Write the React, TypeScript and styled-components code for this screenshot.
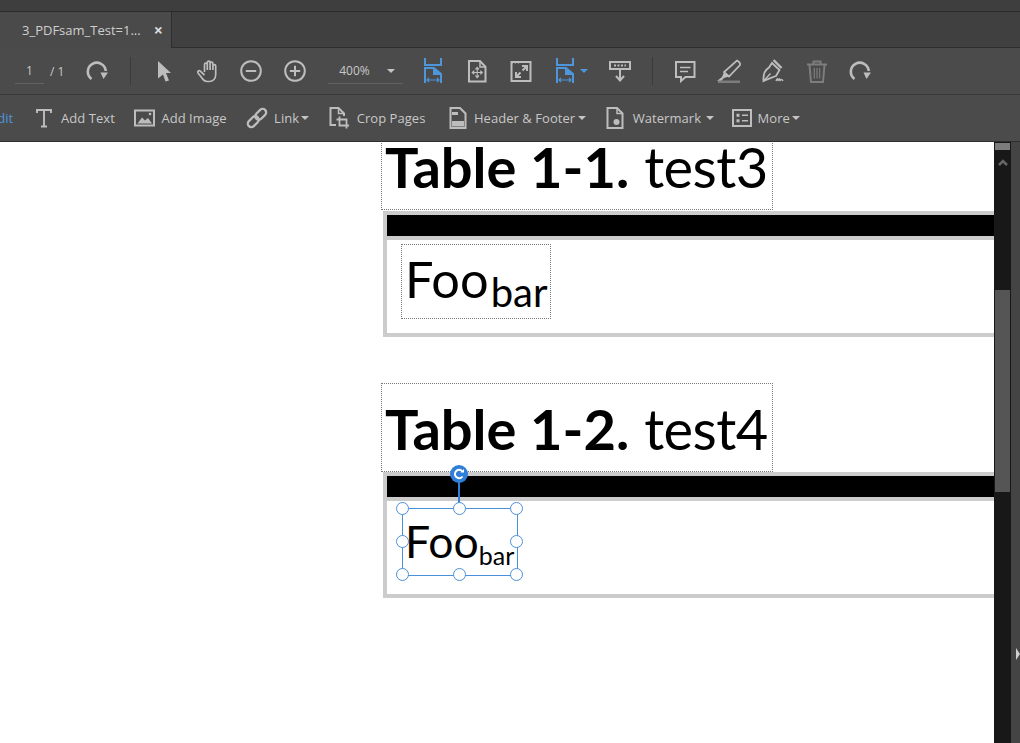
import React from "react";
import styled, { createGlobalStyle } from "styled-components";

const Global = createGlobalStyle`
  html, body { margin: 0; padding: 0; background: #fff; }
  body { font-family: "Open Sans", "Liberation Sans", sans-serif; }
`;

const Window = styled.div`
  width: 1020px;
  height: 743px;
  display: flex;
  flex-direction: column;
  overflow: hidden;
`;
const TopStrip = styled.div`
  height: 11px;
  background: #3e3e3e;
  border-bottom: 1px solid #2c2c2c;
`;
const TabRow = styled.div`
  height: 36px;
  display: flex;
  background: #404040;
`;
const Tab = styled.div`
  width: 172px;
  box-sizing: border-box;
  background: #4a4a4a;
  border-right: 1px solid #2e2e2e;
  display: flex;
  align-items: center;
  padding: 0 8px 0 22px;
  justify-content: space-between;
  color: #cfcfcf;
  font-size: 13px;
  white-space: nowrap;
`;
const TabClose = styled.span`
  color: #d8d8d8;
  font-size: 16px;
  font-weight: 700;
  line-height: 1;
`;
const TabFill = styled.div`
  flex: 1;
  border-bottom: 1px solid #2e2e2e;
`;
const Toolbar = styled.div`
  height: 47px;
  box-sizing: border-box;
  background: #4b4b4b;
  border-bottom: 1px solid #393939;
  display: flex;
  align-items: center;
  padding-left: 15px;
  flex: none;
`;
const PageField = styled.div`
  width: 29px;
  height: 26px;
  box-sizing: border-box;
  border-bottom: 1px solid #626262;
  color: #c8c8c8;
  font-size: 12px;
  text-align: center;
  line-height: 26px;
`;
const PageCount = styled.span`
  color: #c8c8c8;
  font-size: 12px;
  margin-left: 6px;
  width: 32px;
`;
const Sep = styled.div<{ $left: number; $right: number }>`
  width: 1px;
  height: 28px;
  background: #3a3a3a;
  margin: 0 ${(p) => p.$right}px 0 ${(p) => p.$left}px;
`;
const Btn = styled.div<{ $w?: number }>`
  width: ${(p) => p.$w ?? 43.8}px;
  height: 30px;
  display: flex;
  align-items: center;
  justify-content: center;
  flex: none;
  color: #bdbdbd;
`;
const SplitBtn = styled(Btn)`
  justify-content: flex-start;
  padding-left: 12px;
  box-sizing: border-box;
  gap: 5px;
`;
const ZoomField = styled.div`
  width: 75px;
  height: 26px;
  margin: 0 8px 0 11px;
  box-sizing: border-box;
  border-bottom: 1px solid #626262;
  display: flex;
  align-items: center;
  justify-content: space-between;
  padding: 0 8px 0 11px;
  color: #c8c8c8;
  font-size: 12px;
  flex: none;
`;
const Caret = styled.span<{ $blue?: boolean }>`
  display: inline-block;
  width: 0;
  height: 0;
  border-left: 4px solid transparent;
  border-right: 4px solid transparent;
  border-top: 4px solid ${(p) => (p.$blue ? "#4d96dc" : "#c4c4c4")};
`;
const ToolCaret = styled(Caret)`
  margin-left: -4px;
`;
const ToolRow = styled(Toolbar)`
  padding-left: 0;
  border-bottom-color: #2e2e2e;
  gap: 19.5px;
`;
const EditLabel = styled.span`
  color: #4d96dc;
  font-size: 13px;
  margin-left: -10px;
  margin-right: 3.5px;
`;
const Tool = styled.div<{ $gap?: number; $after?: number }>`
  display: flex;
  align-items: center;
  gap: ${(p) => p.$gap ?? 6}px;
  margin-right: ${(p) => p.$after ?? 0}px;
  color: #c8c8c8;
  font-size: 13px;
  letter-spacing: 0.05px;
  white-space: nowrap;
`;
const Body = styled.div`
  flex: 1;
  display: flex;
  min-height: 0;
`;
const Canvas = styled.div`
  flex: 1;
  min-width: 0;
  background: #fff;
  overflow: hidden;
`;
const Doc = styled.div`
  margin: -21px 0 0 381px;
  font-family: "Lato", "Liberation Sans", sans-serif;
  color: #000;
`;
const Caption = styled.div`
  width: 392px;
  height: 89px;
  box-sizing: border-box;
  border: 1px dotted #777;
  font-size: 56px;
  line-height: 56px;
  padding: 17px 0 0 3px;
  white-space: nowrap;
  b { font-weight: 700; margin-right: 15px; }
  span { letter-spacing: -0.6px; }
`;
const TableFrame = styled.div<{ $top: number }>`
  margin: ${(p) => p.$top}px 0 0 2px;
  height: 126px;
  box-sizing: border-box;
  border: 4px solid #cccccc;
  border-right: none;
  display: flex;
  flex-direction: column;
`;
const HeadBar = styled.div`
  height: 21px;
  background: #000;
  border-bottom: 4px solid #cccccc;
  flex: none;
`;
const TableBody = styled.div<{ $pad: number }>`
  flex: 1;
  position: relative;
  padding: ${(p) => p.$pad}px 0 0 14px;
`;
const TableGap = styled.div`
  height: 46px;
`;
const CellBox = styled.div`
  width: 150px;
  height: 75px;
  box-sizing: border-box;
  border: 1px dotted #777;
  font-size: 50.5px;
  line-height: 68px;
  padding-left: 3px;
  white-space: nowrap;
  sub { font-size: 40px; line-height: 0; vertical-align: -9px; margin-left: 2px; }
`;
const SelectBox = styled.div`
  position: relative;
  width: 116px;
  height: 68px;
  margin-left: 1px;
  box-sizing: border-box;
  border: 1px solid #4a90d9;
  font-size: 44.5px;
  line-height: 64px;
  padding-left: 2px;
  white-space: nowrap;
  sub { font-size: 25px; line-height: 0; vertical-align: -7px; }
`;
const Handle = styled.span<{ $x: number; $y: number }>`
  position: absolute;
  left: ${(p) => p.$x}%;
  top: ${(p) => p.$y}%;
  width: 13px;
  height: 13px;
  box-sizing: border-box;
  margin: -7px 0 0 -7px;
  border: 1.5px solid #4a90d9;
  border-radius: 50%;
  background: #fff;
`;
const Stem = styled.span`
  position: absolute;
  left: 50%;
  top: -36px;
  width: 2px;
  height: 30px;
  margin-left: -2px;
  background: #2f7fd8;
`;
const RotateHandle = styled.span`
  position: absolute;
  left: 50%;
  top: -44px;
  width: 18px;
  height: 18px;
  margin-left: -10px;
  border-radius: 50%;
  background: #2f7fd8;
  display: flex;
  align-items: center;
  justify-content: center;
`;
const Scrollbar = styled.div`
  width: 17px;
  box-sizing: border-box;
  padding: 0 1px;
  background: #181818;
  flex: none;
  display: flex;
  flex-direction: column;
`;
const ScrollCap = styled.div`
  height: 7px;
  margin-top: 1px;
  background: #7c7c7c;
`;
const ScrollUp = styled.div`
  height: 20px;
  display: flex;
  align-items: center;
  justify-content: center;
  margin-top: 2px;
`;
const Thumb = styled.div`
  height: 202px;
  margin-top: 118px;
  background: #555;
`;
const Rail = styled.div`
  width: 9px;
  background: #444;
  flex: none;
  display: flex;
  justify-content: flex-end;
  align-items: flex-start;
  padding-top: 506px;
  box-sizing: border-box;
`;
const RailArrow = styled.span`
  width: 0;
  height: 0;
  border-top: 6px solid transparent;
  border-bottom: 6px solid transparent;
  border-left: 4px solid #cfcfcf;
`;

const G = "#bdbdbd";
const B = "#4d96dc";
const Dim = "#7d7d7d";

const Icon: React.FC<{ w?: number; h?: number; children: React.ReactNode }> = ({ w = 24, h = 24, children }) => (
  <svg width={w} height={h} viewBox={`0 0 ${w} ${h}`} fill="none" stroke={G} strokeWidth={2}>
    {children}
  </svg>
);

const Redo = () => (
  <Icon>
    <path d="M6.5 20 A 9 9 0 1 1 20.8 12" strokeWidth={2.6} />
    <path d="M15.5 13.5 H23 L18.5 20 Z" fill={G} stroke="none" />
  </Icon>
);
const Cursor = () => (
  <Icon>
    <path d="M6 2 L19 14 H14 L17 21.5 L13.5 22.5 L11 15.5 L6 19.5 Z" fill={G} stroke="none" />
  </Icon>
);
const HandIcon = () => (
  <Icon>
    <path
      d="M8.5 13 V5.5 a1.4 1.4 0 0 1 2.8 0 V11 M11.3 11 V3.5 a1.4 1.4 0 0 1 2.8 0 V11 M14.1 11 V4.5 a1.4 1.4 0 0 1 2.8 0 V11 M16.9 11 V7 a1.4 1.4 0 0 1 2.8 0 V15.5 c0 4 -2.5 7 -6.5 7 h-2 c-3 0 -4.500 -2 -6 -4.500 L2 14 c-1 -1.600 1 -3 2.300 -1.800 L8.500 16"
      strokeWidth={1.7}
    />
  </Icon>
);
const ZoomCircle: React.FC<{ plus?: boolean }> = ({ plus }) => (
  <Icon>
    <circle cx="12" cy="12" r="9.800" />
    <path d="M6.800 12 H17.200" />
    {plus && <path d="M12 6.800 V17.200" />}
  </Icon>
);
const FitWidth = () => (
  <svg width="20" height="26" viewBox="0 0 20 26" fill="none" stroke={B} strokeWidth={2}>
    <path d="M2 0 V7 H18 V0" />
    <path d="M2 25 V10 H11 L18 16 V25" />
    <path d="M11 10 V16 H18" fill={B} />
    <path d="M4 22 H16 M6 20 L4 22 L6 24 M14 20 L16 22 L14 24" strokeWidth={1.200} />
  </svg>
);
const FitPage = () => (
  <Icon h={24}>
    <path d="M4 2 H15 L20.500 8 V22.500 H4 Z" />
    <path d="M15 2 V8 H20.500" strokeWidth={1.500} />
    <path d="M12.200 9 V18 M7.800 13.500 H16.800" strokeWidth={1.100} />
    <path d="M10.500 10.500 L12.200 8.500 L13.900 10.500 M10.500 16.500 L12.200 18.500 L13.900 16.500 M9.300 11.800 L7.300 13.500 L9.300 15.200 M15.300 11.800 L17.300 13.500 L15.300 15.200" strokeWidth={1.200} />
  </Icon>
);
const FullScreen = () => (
  <Icon>
    <path d="M3 4 H4 M6 4 H7 M9 4 H10" strokeWidth={1.200} />
    <path d="M2.500 3 H21.500 V22 H2.500 Z" strokeWidth={2} />
    <path d="M7 18 L11.500 13.500 M7 13 V18 H12 M18 7 L13.500 11.500 M13 7 H18 V12" strokeWidth={2} />
  </Icon>
);
const Download = () => (
  <Icon w={24} h={24}>
    <path d="M2 3 H22 V10 H2 Z" />
    <path d="M6 6.500 H18" strokeDasharray="2 1.500" strokeWidth={1.800} />
    <path d="M12 11 V21 M8 17 L12 21.500 L16 17" strokeWidth={2} />
  </Icon>
);
const Comment = () => (
  <Icon>
    <path d="M3 3 H21.500 V18 H12.500 L8 22 V18 H3 Z" />
    <path d="M7 8.500 H17.500 M7 12.500 H15" strokeWidth={1.600} />
  </Icon>
);
const Highlight = () => (
  <Icon>
    <path d="M20 1.500 C22 2.500 23.500 4 23 6 L12 17.500 L7 13 Z" strokeWidth={1.700} />
    <path d="M7 13 L5 18 L0 22 H4 L7 19 L12 17.500 L7 13 Z" fill={G} stroke="none" />
    <rect x="1" y="21.500" width="22" height="2.500" fill={Dim} stroke="none" />
  </Icon>
);
const Pen = () => (
  <Icon>
    <path d="M11 4 L18.500 11 L15 17 C10 19 6 20 2.500 22 C2 16 4 11 8 8.500 Z" strokeWidth={1.800} />
    <path d="M2.500 22 L9.500 14.500" strokeWidth={1.400} />
    <path d="M12.500 1 L20.500 9" strokeWidth={2.400} />
    <path d="M15 22 c1 -3 2 -3 2 0 c1 -3 2 -3 2 0 c1 -2 2 -2 3 0" strokeWidth={1.400} />
  </Icon>
);
const Trash = () => (
  <svg width="24" height="24" viewBox="0 0 24 24" fill="none" stroke={Dim} strokeWidth={2}>
    <path d="M2 5.500 H22 M8.500 5 V2.500 H15.500 V5" />
    <path d="M4.500 6 L6 23 H18 L19.500 6" />
    <path d="M9.300 9 V19.500 M12 9 V19.500 M14.700 9 V19.500" strokeWidth={1.200} />
  </svg>
);

const TextIcon = () => (
  <Icon w={16} h={20}>
    <path d="M1 5 V2 H15 V5 M8 2 V18.500 M5 18.500 H11" strokeWidth={1.900} />
  </Icon>
);
const ImageIcon = () => (
  <Icon w={21} h={18}>
    <rect x="1" y="1.500" width="19" height="15" />
    <path d="M3.500 14.500 L8 8.500 L11 11.500 L14 9 L18 14.500 Z" fill={G} stroke="none" />
    <circle cx="16" cy="5" r="1.300" fill={G} stroke="none" />
  </Icon>
);
const LinkIcon = () => (
  <Icon w={22} h={22}>
    <g transform="rotate(-45 11 11)" strokeWidth={2.300}>
      <rect x="-0.500" y="7.500" width="12.500" height="7" rx="3.500" />
      <rect x="10" y="7.500" width="12.500" height="7" rx="3.500" />
    </g>
  </Icon>
);
const CropIcon = () => (
  <Icon w={21} h={22}>
    <path d="M7 18 H1.500 V1 H9.500 L15 6.500 V9" />
    <path d="M9.500 1 V6.500 H15" strokeWidth={1.500} />
    <path d="M10.500 9.500 V18.500 H20 M7.500 12.500 H17.500 V21.500" strokeWidth={1.800} />
  </Icon>
);
const HeaderIcon = () => (
  <Icon w={18} h={22}>
    <path d="M1.500 1 H11 L16.500 6.500 V21 H1.500 Z" />
    <path d="M3 5 H9 V8 H3 Z" fill={G} stroke="none" />
    <rect x="3" y="14" width="12" height="5.500" fill={G} stroke="none" />
  </Icon>
);
const WatermarkIcon = () => (
  <Icon w={18} h={22}>
    <path d="M1.500 1 H11 L16.500 6.500 V21 H1.500 Z" />
    <path d="M11 1 V6.500 H16.500" strokeWidth={1.500} />
    <circle cx="10.500" cy="15" r="3" fill={G} stroke="none" />
  </Icon>
);
const MoreIcon = () => (
  <Icon w={20} h={18}>
    <rect x="1" y="1" width="18" height="16" />
    <rect x="4.500" y="4.800" width="3" height="3" fill={G} stroke="none" />
    <rect x="4.500" y="10.300" width="3" height="3" fill={G} stroke="none" />
    <path d="M10 6.300 H16 M10 11.800 H16" strokeWidth={1.500} />
  </Icon>
);

const handles: [number, number][] = [
  [0, 0], [50, 0], [100, 0],
  [0, 50], [100, 50],
  [0, 100], [50, 100], [100, 100],
];

export default function App() {
  return (
    <Window>
      <Global />
      <TopStrip />
      <TabRow>
        <Tab>
          <span>3_PDFsam_Test=1...</span>
          <TabClose>×</TabClose>
        </Tab>
        <TabFill />
      </TabRow>
      <Toolbar>
        <PageField>1</PageField>
        <PageCount>/ 1</PageCount>
        <Btn $w={30}><Redo /></Btn>
        <Sep $left={18} $right={11} />
        <Btn><Cursor /></Btn>
        <Btn><HandIcon /></Btn>
        <Btn><ZoomCircle /></Btn>
        <Btn><ZoomCircle plus /></Btn>
        <ZoomField>400%<Caret /></ZoomField>
        <Btn><FitWidth /></Btn>
        <Btn><FitPage /></Btn>
        <Btn><FullScreen /></Btn>
        <SplitBtn $w={56}><FitWidth /><Caret $blue /></SplitBtn>
        <Btn><Download /></Btn>
        <Sep $left={10} $right={10} />
        <Btn><Comment /></Btn>
        <Btn><Highlight /></Btn>
        <Btn><Pen /></Btn>
        <Btn><Trash /></Btn>
        <Btn><Redo /></Btn>
      </Toolbar>
      <ToolRow>
        <EditLabel>Edit</EditLabel>
        <Tool $gap={9}><TextIcon />Add Text</Tool>
        <Tool><ImageIcon />Add Image</Tool>
        <Tool><LinkIcon />Link<ToolCaret /></Tool>
        <Tool $gap={7} $after={4}><CropIcon />Crop Pages</Tool>
        <Tool $gap={7}><HeaderIcon />Header &amp; Footer<ToolCaret /></Tool>
        <Tool $gap={9} $after={-2}><WatermarkIcon />Watermark<ToolCaret /></Tool>
        <Tool><MoreIcon />More<ToolCaret /></Tool>
      </ToolRow>
      <Body>
        <Canvas>
          <Doc>
            <Caption><b>Table 1-1.</b><span>test3</span></Caption>
            <TableFrame $top={1}>
              <HeadBar />
              <TableBody $pad={4}>
                <CellBox>Foo<sub>bar</sub></CellBox>
              </TableBody>
            </TableFrame>
            <TableGap />
            <Caption><b>Table 1-2.</b><span>test4</span></Caption>
            <TableFrame $top={0}>
              <HeadBar />
              <TableBody $pad={7}>
                <SelectBox>
                  Foo<sub>bar</sub>
                  <Stem />
                  <RotateHandle>
                    <svg width="12" height="12" viewBox="0 0 12 12" fill="none" stroke="#fff" strokeWidth={2}>
                      <path d="M9.500 8.500 A 4.200 4.200 0 1 1 9.500 3.500" />
                      <path d="M7.500 4.500 H11 V1 Z" fill="#fff" stroke="none" />
                    </svg>
                  </RotateHandle>
                  {handles.map(([x, y]) => (
                    <Handle key={`${x}-${y}`} $x={x} $y={y} />
                  ))}
                </SelectBox>
              </TableBody>
            </TableFrame>
          </Doc>
        </Canvas>
        <Scrollbar>
          <ScrollCap />
          <ScrollUp>
            <svg width="10" height="7" viewBox="0 0 10 7" fill="none" stroke="#666" strokeWidth={2.500}>
              <path d="M1 6 L5 2 L9 6" />
            </svg>
          </ScrollUp>
          <Thumb />
        </Scrollbar>
        <Rail><RailArrow /></Rail>
      </Body>
    </Window>
  );
}
